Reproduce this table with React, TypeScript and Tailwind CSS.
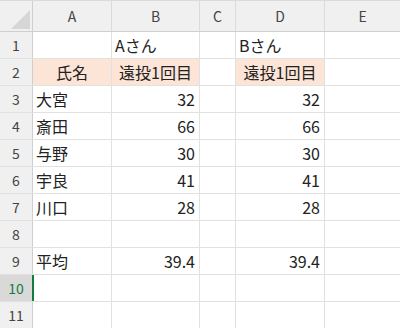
import React from "react";

const font = { fontFamily: '"Noto Sans CJK JP", "Noto Sans", sans-serif' };

type Cell = { t?: string; align?: "l" | "r" | "c"; pink?: boolean };

const rows: Cell[][] = [
  [{}, { t: "Aさん", align: "l" }, {}, { t: "Bさん", align: "l" }, {}],
  [{ t: "氏名", align: "c", pink: true }, { t: "遠投1回目", align: "c", pink: true }, {}, { t: "遠投1回目", align: "c", pink: true }, {}],
  [{ t: "大宮", align: "l" }, { t: "32", align: "r" }, {}, { t: "32", align: "r" }, {}],
  [{ t: "斎田", align: "l" }, { t: "66", align: "r" }, {}, { t: "66", align: "r" }, {}],
  [{ t: "与野", align: "l" }, { t: "30", align: "r" }, {}, { t: "30", align: "r" }, {}],
  [{ t: "宇良", align: "l" }, { t: "41", align: "r" }, {}, { t: "41", align: "r" }, {}],
  [{ t: "川口", align: "l" }, { t: "28", align: "r" }, {}, { t: "28", align: "r" }, {}],
  [{}, {}, {}, {}, {}],
  [{ t: "平均", align: "l" }, { t: "39.4", align: "r" }, {}, { t: "39.4", align: "r" }, {}],
  [{}, {}, {}, {}, {}],
  [{}, {}, {}, {}, {}],
];

const widths = ["w-[79px]", "w-[88px]", "w-[36px]", "w-[89px]", "flex-1"];
const letters = ["A", "B", "C", "D", "E"];

export default function App() {
  return (
    <div className="w-[400px] h-[328px] overflow-hidden bg-white text-[#222]" style={font}>
      {/* header row */}
      <div className="flex h-[32px] bg-[#f0f0f0] border-b border-[#cfcfcf] border-t border-t-[#dadada]">
        <div className="w-[33px] shrink-0 border-r border-[#cfcfcf] relative">
          <svg className="absolute left-[11px] top-[9px]" width="19" height="19" viewBox="0 0 19 19">
            <polygon points="0,19 19,19 19,0" fill="#d6d6d6" />
          </svg>
        </div>
        {letters.map((l, i) => (
          <div
            key={l}
            className={`${widths[i]} shrink-0 flex items-center justify-center text-[14px] text-[#444] ${i < 4 ? "border-r border-[#dadada]" : ""}`}
          >
            {l}
          </div>
        ))}
      </div>
      {rows.map((r, ri) => {
        const sel = ri === 9;
        return (
          <div key={ri} className="flex h-[27px] border-b border-[#e1e1e1]">
            <div
              className={`w-[33px] shrink-0 flex items-center justify-center text-[14px] border-r ${
                sel ? "bg-[#d9d9d9] text-[#107c41] border-[#107c41] border-r-2 w-[34px]" : "bg-[#f0f0f0] text-[#444] border-[#cfcfcf]"
              }`}
            >
              {ri + 1}
            </div>
            {r.map((c, ci) => (
              <div
                key={ci}
                className={`${sel && ci === 0 ? "w-[78px]" : widths[ci]} shrink-0 flex items-center text-[16px] leading-none ${
                  ci < 4 ? "border-r border-[#e1e1e1]" : ""
                } ${c.pink ? "bg-[#fce4d6]" : ""} ${
                  c.align === "r" ? "justify-end pr-[4px]" : c.align === "c" ? "justify-center" : "justify-start pl-[3px]"
                }`}
              >
                {c.t}
              </div>
            ))}
          </div>
        );
      })}
    </div>
  );
}
